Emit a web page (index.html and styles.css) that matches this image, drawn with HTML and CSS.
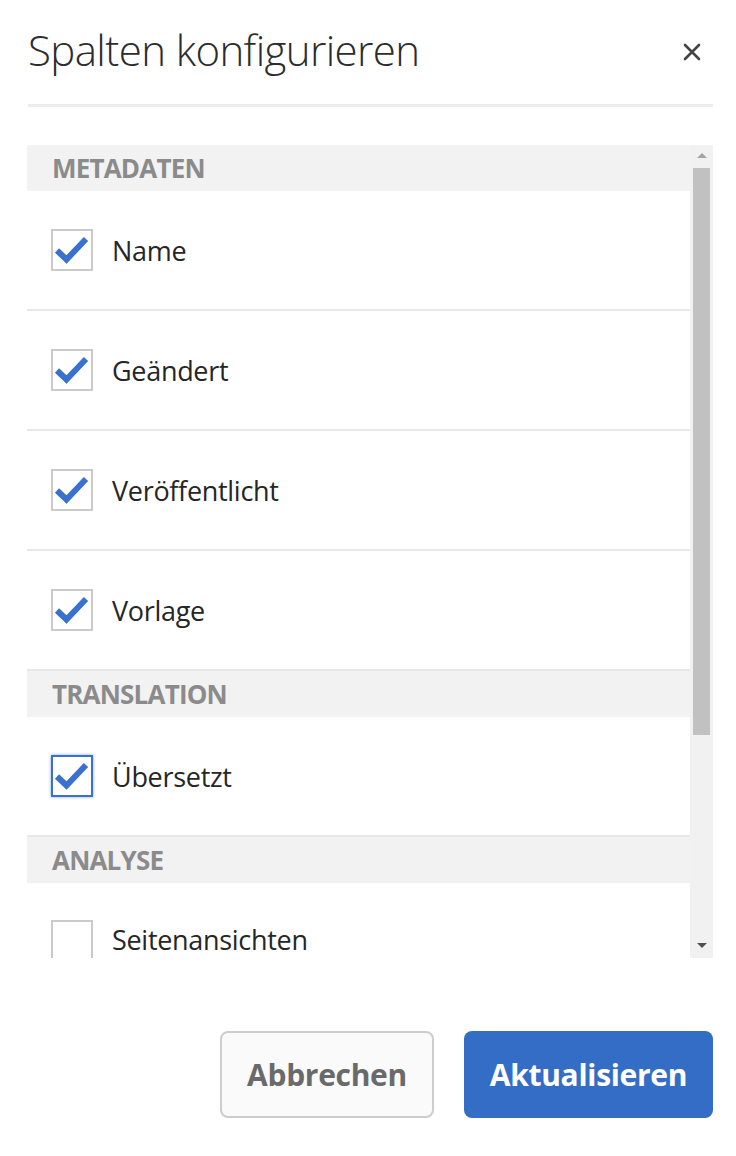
FILE: index.html
```html
<!DOCTYPE html>
<html lang="de">
<head>
<meta charset="utf-8">
<title>Spalten konfigurieren</title>
<link rel="stylesheet" href="styles.css">
</head>
<body>
<div class="dialog">
  <div class="head">
    <h1 class="title">Spalten konfigurieren</h1>
    <button class="close" aria-label="Schließen">
      <svg width="18" height="18" viewBox="0 0 18 18"><path d="M2 2 L16 16 M16 2 L2 16" stroke="#444" stroke-width="2.6" stroke-linecap="round"/></svg>
    </button>
  </div>
  <div class="rule"></div>
  <div class="scrollbox">
    <div class="list">
      <div class="section">METADATEN</div>
      <label class="row"><span class="cb on"><svg viewBox="0 0 36 36" width="36" height="36"><path d="M3 18.5 L12.5 27.5 L32 7" fill="none" stroke="#3a70d0" stroke-width="6"/></svg></span><span class="lbl">Name</span></label>
      <label class="row"><span class="cb on"><svg viewBox="0 0 36 36" width="36" height="36"><path d="M3 18.5 L12.5 27.5 L32 7" fill="none" stroke="#3a70d0" stroke-width="6"/></svg></span><span class="lbl">Geändert</span></label>
      <label class="row"><span class="cb on"><svg viewBox="0 0 36 36" width="36" height="36"><path d="M3 18.5 L12.5 27.5 L32 7" fill="none" stroke="#3a70d0" stroke-width="6"/></svg></span><span class="lbl">Veröffentlicht</span></label>
      <label class="row"><span class="cb on"><svg viewBox="0 0 36 36" width="36" height="36"><path d="M3 18.5 L12.5 27.5 L32 7" fill="none" stroke="#3a70d0" stroke-width="6"/></svg></span><span class="lbl">Vorlage</span></label>
      <div class="section">TRANSLATION</div>
      <label class="row"><span class="cb on focus"><svg viewBox="0 0 36 36" width="36" height="36"><path d="M3 18.5 L12.5 27.5 L32 7" fill="none" stroke="#3a70d0" stroke-width="6"/></svg></span><span class="lbl">Übersetzt</span></label>
      <div class="section">ANALYSE</div>
      <label class="row tail"><span class="cb"></span><span class="lbl">Seitenansichten</span></label>
    </div>
    <div class="scrollbar">
      <div class="arrow up"></div>
      <div class="track"><div class="thumb"></div></div>
      <div class="arrow down"></div>
    </div>
  </div>
  <div class="actions">
    <button class="btn secondary">Abbrechen</button>
    <button class="btn primary">Aktualisieren</button>
  </div>
</div>
</body>
</html>
```
FILE: styles.css
```css
* { box-sizing: border-box; }
html, body { margin: 0; padding: 0; background: #fff; }
body { font-family: "Open Sans", "Noto Sans", sans-serif; color: #2c2c2c; }
.dialog { width: 736px; height: 1156px; padding: 0 23px 0 27px; display: flex; flex-direction: column; }
.head { display: flex; align-items: center; justify-content: space-between; height: 104px; padding-left: 1px; }
.title { margin: 0; font-weight: 300; font-size: 42px; letter-spacing: -0.6px; color: #2c2c2c; line-height: 1; padding-bottom: 4px; }
.close { background: none; border: 0; padding: 0; margin-right: 12px; display: flex; margin-top: 0; }
.rule { height: 3px; background: #ececec; margin-left: 1px; }
.scrollbox { margin-top: 38px; height: 813px; display: flex; overflow: hidden; }
.list { flex: 1; overflow: hidden; }
.section { height: 46px; background: #f2f2f2; color: #8b8b8b; font-weight: 700; font-size: 26px; letter-spacing: -0.8px; padding-left: 25px; display: flex; align-items: center; }
.row { height: 120px; display: flex; align-items: center; padding-left: 24px; border-bottom: 2px solid #e8e8e8; }
.row.tail { height: 75px; align-items: flex-start; padding-top: 37px; border-bottom: 0; }
.row.tail .lbl { margin-top: 1px; line-height: normal; }
.cb { width: 42px; height: 42px; border: 2px solid #cacaca; background: #fff; display: flex; align-items: center; justify-content: center; flex: none; }
.cb.focus { border-color: #3a70d0; box-shadow: 0 0 3px rgba(58,112,208,0.6); }
.lbl { margin-left: 19px; font-size: 27px; line-height: 1; letter-spacing: -0.3px; color: #262626; }
.scrollbar { width: 23px; background: #f1f1f1; display: flex; flex-direction: column; align-items: center; }
.arrow { width: 0; height: 0; border-left: 5px solid transparent; border-right: 5px solid transparent; }
.arrow.up { border-bottom: 5px solid #a3a3a3; margin: 8px 0 10px; }
.arrow.down { border-top: 5px solid #505050; margin: 0 0 10px; }
.track { flex: 1; width: 100%; display: flex; justify-content: center; }
.thumb { width: 17px; height: 567px; background: #c1c1c1; }
.actions { margin-top: 73px; display: flex; justify-content: flex-end; gap: 30px; }
.btn { height: 87px; border-radius: 8px; font-family: "Open Sans", sans-serif; font-weight: 700; font-size: 30px; letter-spacing: -0.3px; cursor: pointer; }
.secondary { width: 214px; background: #fafafa; border: 2px solid #cdcdcd; color: #6a6a6a; }
.primary { width: 249px; background: #346dc6; border: 0; color: #fff; }
```
